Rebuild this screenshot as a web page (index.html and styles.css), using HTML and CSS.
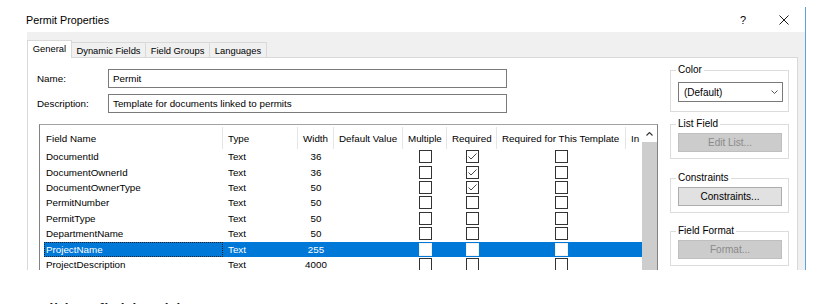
FILE: index.html
```html
<!DOCTYPE html>
<html>
<head>
<meta charset="utf-8">
<title>Permit Properties</title>
<link rel="stylesheet" href="styles.css">
</head>
<body>
<div class="window">
  <div class="titlebar">
    <span class="title">Permit Properties</span>
    <span class="help">?</span>
    <svg class="close" viewBox="0 0 10 10"><path d="M0.5 0.5L9.5 9.5M9.5 0.5L0.5 9.5" stroke="#1a1a1a" stroke-width="1" fill="none"/></svg>
  </div>
  <div class="client">
    <div class="tabs">
      <div class="tab active t-general">General</div>
      <div class="tab t-dyn">Dynamic Fields</div>
      <div class="tab t-groups">Field Groups</div>
      <div class="tab t-lang">Languages</div>
    </div>
    <div class="panel">
      <div class="main">
        <div class="frow"><span class="lbl">Name:</span><div class="input">Permit</div></div>
        <div class="frow"><span class="lbl">Description:</span><div class="input">Template for documents linked to permits</div></div>
        <div class="grid">
          <div class="gbody">
            <div class="cols ghead">
              <div class="pad"></div>
              <div class="h h-name">Field Name</div>
              <div class="h">Type</div>
              <div class="h">Width</div>
              <div class="h">Default Value</div>
              <div class="h">Multiple</div>
              <div class="h">Required</div>
              <div class="h">Required for This Template</div>
              <div class="h h-last">In</div>
            </div>
            <div class="cols row">
              <div class="pad"></div><div class="c name">DocumentId</div><div class="c">Text</div><div class="c num">36</div><div class="c"></div>
              <div class="c chk"><span class="cb"></span></div>
              <div class="c chk"><span class="cb"><svg viewBox="0 0 11 11"><polyline points="1.5,5.5 4,8 9.5,2.5" fill="none" stroke="#4a4a4a" stroke-width="1"/></svg></span></div>
              <div class="c chk"><span class="cb"></span></div><div class="c"></div>
            </div>
            <div class="cols row">
              <div class="pad"></div><div class="c name">DocumentOwnerId</div><div class="c">Text</div><div class="c num">36</div><div class="c"></div>
              <div class="c chk"><span class="cb"></span></div>
              <div class="c chk"><span class="cb"><svg viewBox="0 0 11 11"><polyline points="1.5,5.5 4,8 9.5,2.5" fill="none" stroke="#4a4a4a" stroke-width="1"/></svg></span></div>
              <div class="c chk"><span class="cb"></span></div><div class="c"></div>
            </div>
            <div class="cols row">
              <div class="pad"></div><div class="c name">DocumentOwnerType</div><div class="c">Text</div><div class="c num">50</div><div class="c"></div>
              <div class="c chk"><span class="cb"></span></div>
              <div class="c chk"><span class="cb"><svg viewBox="0 0 11 11"><polyline points="1.5,5.5 4,8 9.5,2.5" fill="none" stroke="#4a4a4a" stroke-width="1"/></svg></span></div>
              <div class="c chk"><span class="cb"></span></div><div class="c"></div>
            </div>
            <div class="cols row">
              <div class="pad"></div><div class="c name">PermitNumber</div><div class="c">Text</div><div class="c num">50</div><div class="c"></div>
              <div class="c chk"><span class="cb"></span></div><div class="c chk"><span class="cb"></span></div><div class="c chk"><span class="cb"></span></div><div class="c"></div>
            </div>
            <div class="cols row">
              <div class="pad"></div><div class="c name">PermitType</div><div class="c">Text</div><div class="c num">50</div><div class="c"></div>
              <div class="c chk"><span class="cb"></span></div><div class="c chk"><span class="cb"></span></div><div class="c chk"><span class="cb"></span></div><div class="c"></div>
            </div>
            <div class="cols row">
              <div class="pad"></div><div class="c name">DepartmentName</div><div class="c">Text</div><div class="c num">50</div><div class="c"></div>
              <div class="c chk"><span class="cb"></span></div><div class="c chk"><span class="cb"></span></div><div class="c chk"><span class="cb"></span></div><div class="c"></div>
            </div>
            <div class="cols row sel">
              <div class="pad"></div><div class="c name">ProjectName</div><div class="c">Text</div><div class="c num">255</div><div class="c"></div>
              <div class="c chk"><span class="cb"></span></div><div class="c chk"><span class="cb"></span></div><div class="c chk"><span class="cb"></span></div><div class="c"></div>
            </div>
            <div class="cols row">
              <div class="pad"></div><div class="c name">ProjectDescription</div><div class="c">Text</div><div class="c num">4000</div><div class="c"></div>
              <div class="c chk"><span class="cb"></span></div><div class="c chk"><span class="cb"></span></div><div class="c chk"><span class="cb"></span></div><div class="c"></div>
            </div>
          </div>
          <div class="vs">
            <div class="vs-up"><svg viewBox="0 0 7 4" width="7" height="4"><polyline points="0.5,3.5 3.5,0.5 6.5,3.5" fill="none" stroke="#333" stroke-width="1.1"/></svg></div>
            <div class="vs-thumb"></div>
          </div>
        </div>
      </div>
      <div class="side">
        <fieldset class="grp g-color">
          <legend>Color</legend>
          <div class="select"><span>(Default)</span><svg viewBox="0 0 7 4" width="7" height="4"><polyline points="0.5,0.5 3.5,3.5 6.5,0.5" fill="none" stroke="#555" stroke-width="1"/></svg></div>
        </fieldset>
        <fieldset class="grp g-list">
          <legend>List Field</legend>
          <div class="btn dis">Edit List...</div>
        </fieldset>
        <fieldset class="grp g-cons">
          <legend>Constraints</legend>
          <div class="btn">Constraints...</div>
        </fieldset>
        <fieldset class="grp g-fmt">
          <legend>Field Format</legend>
          <div class="btn dis">Format...</div>
        </fieldset>
      </div>
    </div>
  </div>
</div>
<div class="caption">Editing field Table</div>
</body>
</html>
```
FILE: styles.css
```css
* { box-sizing: border-box; }
html, body { margin: 0; padding: 0; }
body {
  width: 820px;
  height: 304px;
  overflow: hidden;
  background: #fff;
  font-family: "Liberation Sans", Arial, sans-serif;
  font-size: 9.8px;
  color: #000;
}
.window {
  width: 806px;
  height: 263px;
  margin-top: 7px;
  border-right: 1px solid #5ea3dc;
  display: flex;
  flex-direction: column;
}
.titlebar {
  height: 25px;
  flex: none;
  display: flex;
  align-items: center;
  padding: 0 16px 0 26px;
}
.title { flex: 1; font-size: 10.75px; }
.help { font-size: 11px; margin-right: 33px; }
.close { width: 10px; height: 10px; display: block; }
.client {
  flex: 1;
  margin-left: 27px;
  padding-right: 7px;
  background: #f0f0f0;
  display: flex;
  flex-direction: column;
  overflow: hidden;
}
.tabs {
  height: 25px;
  flex: none;
  display: flex;
  align-items: flex-end;
}
.tab {
  height: 15px;
  border: 1px solid #d9d9d9;
  border-bottom: none;
  margin-left: -1px;
  display: flex;
  align-items: center;
  justify-content: center;
  font-size: 9.4px;
  white-space: nowrap;
}
.tab.active {
  height: 18px;
  margin-left: 0;
  margin-bottom: -1px;
  padding-bottom: 2px;
  background: #fff;
  position: relative;
  z-index: 1;
}
.t-general { width: 45px; }
.t-dyn { width: 75px; }
.t-groups { width: 65px; }
.t-lang { width: 58px; }
.panel {
  flex: none;
  height: 240px;
  background: #fff;
  border: 1px solid #d9d9d9;
  display: flex;
}
.main {
  flex: none;
  width: 630px;
  padding: 11px 0 0 9px;
}
.frow {
  display: flex;
  align-items: center;
  height: 19px;
}
.frow + .frow { margin-top: 6px; }
.lbl { width: 71px; }
.input {
  width: 399px;
  height: 19px;
  border: 1px solid #7a7a7a;
  padding-left: 4px;
  line-height: 17px;
  white-space: nowrap;
}
.grid {
  margin: 11px 0 0 2px;
  width: 619px;
  height: 180px;
  border: 1px solid #828282;
  border-top-color: #a3a3a3;
  display: flex;
}
.gbody { width: 602px; flex: none; }
.cols {
  display: grid;
  grid-template-columns: 4px 179px 75px 36px 69px 44px 50px 129px 16px;
}
.ghead { height: 24px; }
.ghead .h {
  display: flex;
  align-items: center;
  padding-left: 5px;
  border-right: 1px solid #e5e5e5;
  white-space: nowrap;
  overflow: hidden;
  margin: 2px 0 0;
}
.ghead .h-name { padding-left: 2px; }
.ghead .h-last { border-right: none; padding-left: 5px; }
.row { height: 15.43px; grid-template-rows: 15.43px; }
.row .c {
  display: flex;
  align-items: center;
  padding-left: 5px;
  white-space: nowrap;
  overflow: hidden;
}
.row .c.name { padding-left: 2px; }
.row .c.num, .row .c.chk { justify-content: center; padding-left: 0; }
.row.sel .c { background: #0078d7; color: #fff; }
.row.sel .c.name { outline: 1px dotted #202020; outline-offset: -1px; }
.cb {
  width: 13px;
  height: 13px;
  border: 1px solid #333;
  background: #fff;
  display: flex;
}
.cb svg { width: 11px; height: 11px; display: block; }
.row.sel .cb { border-color: #f2f2f2; }
.vs {
  width: 15px;
  flex: none;
  display: flex;
  flex-direction: column;
}
.vs-up {
  height: 17px;
  flex: none;
  display: flex;
  align-items: center;
  justify-content: center;
  background: #fff;
}
.vs-up svg { display: block; }
.vs-thumb { flex: 1; background: #cdcdcd; }
.side {
  flex: none;
  width: 119px;
  margin-left: 12px;
  padding-top: 5px;
  display: flex;
  flex-direction: column;
}
.grp {
  margin: 0;
  min-width: 0;
  border: 1px solid #dcdcdc;
  padding: 2px 5px 6px 5px;
}
.grp legend {
  padding: 0 2px;
  font-size: 10px;
  line-height: 14px;
}
.g-color { padding-top: 5px; padding-bottom: 9px; }
.g-list { margin-top: 5px; }
.g-cons { margin-top: 12px; }
.g-fmt { margin-top: 11px; }
.select {
  margin-left: 2px;
  width: 105px;
  height: 20px;
  border: 1px solid #7a7a7a;
  background: #fff;
  display: flex;
  align-items: center;
  padding: 0 4px 0 5px;
  font-size: 10px;
}
.select span { flex: 1; }
.select svg { display: block; }
.btn {
  margin-left: 2px;
  width: 104px;
  height: 19px;
  border: 1px solid #adadad;
  background: #e1e1e1;
  display: flex;
  align-items: center;
  justify-content: center;
  font-size: 10px;
}
.btn.dis {
  background: #cccccc;
  border-color: #bfbfbf;
  color: #8a8a8a;
}
.caption {
  margin: 30px 0 0 28px;
  font-size: 21px;
  line-height: 21px;
  color: #1b1b1b;
  white-space: nowrap;
}
```
